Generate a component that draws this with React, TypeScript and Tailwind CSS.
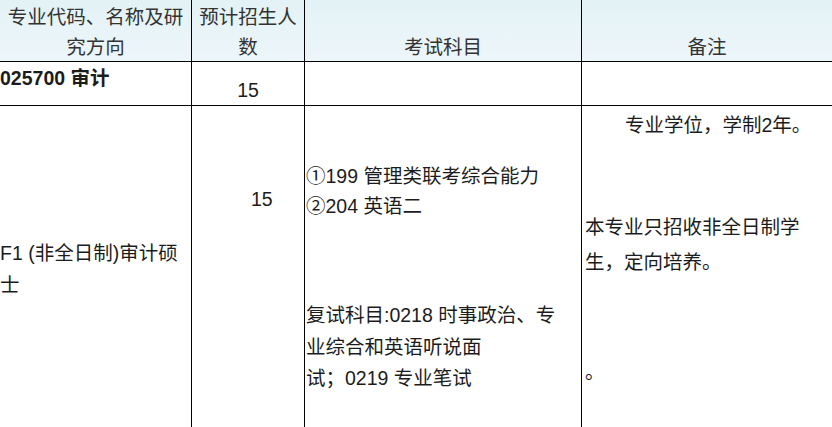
import React from "react";

const font = {
  fontFamily: '"Liberation Sans", "Noto Sans CJK SC", sans-serif',
};

export default function App() {
  return (
    <div
      className="w-[832px] h-[427px] overflow-hidden bg-white text-[19.5px] text-[#1c1c1c]"
      style={font}
    >
      <div className="grid grid-cols-[192px_113px_277px_250px] grid-rows-[62px_44px_321px]">
        {/* Header */}
        <div className="border-r border-b border-black bg-gradient-to-b from-[#e3f2f6] to-[#edf6fa] text-center pt-[2px] leading-[30px] text-[#333]">
          专业代码、名称及研
          <br />
          究方向
        </div>
        <div className="border-r border-b border-black bg-gradient-to-b from-[#e3f2f6] to-[#edf6fa] text-center pt-[2px] leading-[30px] text-[#333]">
          预计招生人
          <br />
          数
        </div>
        <div className="border-r border-b border-black bg-gradient-to-b from-[#e3f2f6] to-[#edf6fa] text-center pt-[32px] leading-[30px] text-[#333]">
          考试科目
        </div>
        <div className="border-b border-black bg-gradient-to-b from-[#e3f2f6] to-[#edf6fa] text-center pt-[32px] leading-[30px] text-[#333]">
          备注
        </div>

        {/* Row 1 */}
        <div className="border-r border-b border-black pt-[1px] leading-[30px] font-bold whitespace-nowrap">
          025700 审计
        </div>
        <div className="border-r border-b border-black pt-[13px] leading-[30px] text-center">
          15
        </div>
        <div className="border-r border-b border-black" />
        <div className="border-b border-black" />

        {/* Row 2 */}
        <div className="border-r border-black pt-[131px] leading-[32px] whitespace-nowrap">
          F1 (非全日制)审计硕
          <br />
          士
        </div>
        <div className="border-r border-black pt-[77px] pl-[59px] leading-[32px]">
          15
        </div>
        <div className="border-r border-black pl-[1px] whitespace-nowrap">
          <div className="pt-[55px] leading-[30px]">
            <div>①199 管理类联考综合能力</div>
            <div>②204 英语二</div>
          </div>
          <div className="mt-[79px] leading-[31.5px]">
            <div>复试科目:0218 时事政治、专</div>
            <div>业综合和英语听说面</div>
            <div>试；0219 专业笔试</div>
          </div>
        </div>
        <div className="pl-[3px] whitespace-nowrap">
          <div className="pt-[4px] pl-[40px] leading-[30px]">
            专业学位，学制2年。
          </div>
          <div className="mt-[70px] leading-[35px]">
            <div>本专业只招收非全日制学</div>
            <div>生，定向培养。</div>
          </div>
          <div className="mt-[77px] leading-[30px]">。</div>
        </div>
      </div>
    </div>
  );
}
